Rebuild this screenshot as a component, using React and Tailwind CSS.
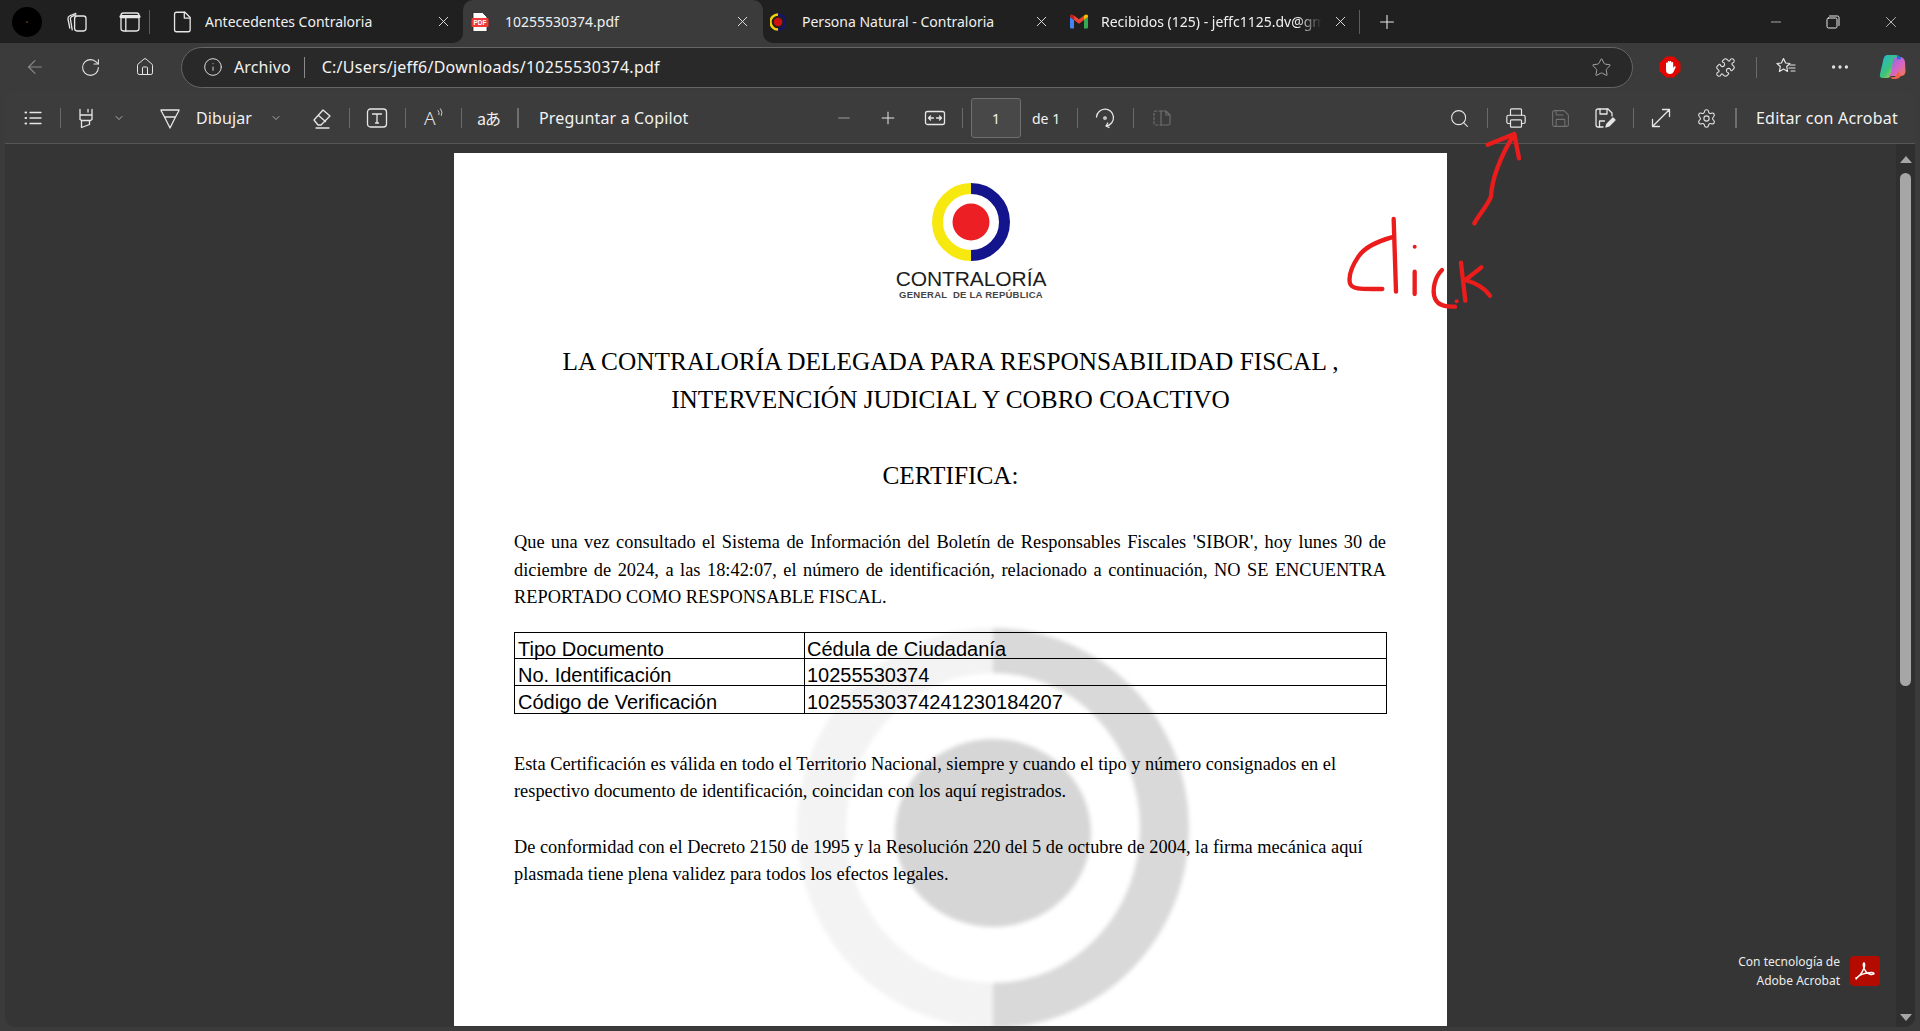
import React from "react";
import { ArrowLeft, RotateCw, Home, Info, Star, Puzzle, MoreHorizontal, Search, Printer, Save, Settings, Minus, Plus, X, ChevronDown } from "lucide-react";

const S = ({ children, className = "", size = 20, stroke = 1.3, vb = "0 0 20 20" }) => (
  <svg width={size} height={size} viewBox={vb} fill="none" stroke="currentColor" strokeWidth={stroke} strokeLinecap="round" strokeLinejoin="round" className={"shrink-0 " + className}>{children}</svg>
);

const Slot = ({ className = "", children }) => (
  <div className={"flex shrink-0 items-center justify-center " + className}>{children}</div>
);
const Sep = ({ className = "" }) => <div className={"w-px h-[20px] shrink-0 bg-[#6a6a6a] " + className} />;

const Tab = ({ outer = "", inner = "", icon, label, labelClass = "", closeClass = "" }) => (
  <div className={"h-full shrink-0 " + outer}>
    <div className={"flex h-full items-center " + inner}>
      {icon}
      <div className={"flex-1 overflow-hidden pb-[1px] whitespace-nowrap text-[14px] tracking-[0px] text-[#f0f0f0] " + labelClass}>{label}</div>
      <X size={17} strokeWidth={1.3} className={"shrink-0 text-[#e8e8e8] " + closeClass} />
    </div>
  </div>
);

const PdfFav = () => (
  <svg width="18" height="20" viewBox="0 0 18 20" className="shrink-0">
    <path d="M2 0.5h9.5l4.5 4.5v14.500h-14z" fill="#fff" stroke="#222" strokeWidth="0.8" />
    <rect x="0.5" y="6" width="17" height="9" rx="1" fill="#f03a3a" />
    <text x="9" y="13" textAnchor="middle" fontSize="6.5" fontWeight="700" fill="#fff" fontFamily="Liberation Sans, sans-serif">PDF</text>
  </svg>
);
const ContraFav = () => (
  <svg width="16" height="20" viewBox="0 0 16 20" className="shrink-0">
    <path d="M8 2.500a7.500 7.500 0 0 0 0 15" fill="none" stroke="#f5d20a" strokeWidth="2.4" />
    <path d="M8 2.500a7.500 7.500 0 0 1 0 15" fill="none" stroke="#15156e" strokeWidth="2.4" />
    <circle cx="8" cy="10" r="4.2" fill="#cf1010" />
  </svg>
);
const Gmail = () => (
  <svg width="18" height="15" viewBox="0 0 18 15" className="shrink-0">
    <path d="M0 3v10.500q0 1 1 1h3V6z" fill="#4285f4" />
    <path d="M18 3v10.500q0 1-1 1h-3V6z" fill="#34a853" />
    <path d="M14 1.500V6l4-3V2q0-2-2-1.500z" fill="#fbbc04" />
    <path d="M4 6V1.500L9 5.300l5-3.800V6L9 9.800z" fill="#ea4335" />
    <path d="M0 3V2Q0 0 2 .5L4 1.500V6z" fill="#c5221f" />
  </svg>
);

const Copilot = () => (
  <svg width="28" height="28" viewBox="0 0 28 28">
    <defs>
      <linearGradient id="cpa" x1="0" y1="0" x2="1" y2="1"><stop offset="0" stopColor="#20b4e6" /><stop offset="0.55" stopColor="#3dc37a" /><stop offset="1" stopColor="#f5c93c" /></linearGradient>
      <linearGradient id="cpb" x1="0" y1="0" x2="1" y2="1"><stop offset="0" stopColor="#7a6bf0" /><stop offset="0.55" stopColor="#d465c8" /><stop offset="1" stopColor="#f47a4a" /></linearGradient>
    </defs>
    <path d="M9 2h9q2 0 1 3l-6 17q-1 3-4 3H5q-4 0-3-4l3-13q1-6 4-6z" fill="url(#cpa)" />
    <path d="M15 7q1-3 4-3h3q4 0 5 5l.5 9q0 5-5 5h-9q-3 0-3-1 2 0 3-3z" fill="url(#cpb)" />
    <path d="M19 2q3 0 4 4l-4 .5z" fill="#1d6fd8" />
    <path d="M12 24q4 1 6-1l2-5 3 5q-2 3-6 3h-3z" fill="#f0624e" />
  </svg>
);

const TabBar = () => (
  <div className="flex h-[43px] shrink-0 items-center bg-[#202020]">
    <div className="flex h-full w-[165px] shrink-0 items-center text-[#e6e6e6]">
      <div className="ml-[12px] flex h-[30px] w-[30px] shrink-0 items-center justify-center rounded-full bg-black">
        <div className="h-[2px] w-[2px] rounded-full bg-[#5a3a10]" />
      </div>
      <Slot className="ml-[20px] w-[30px]">
        <S size={24} stroke={1.1}><rect x="8" y="5" width="9.500" height="12.500" rx="2" /><path d="M6 16.500 4.500 7.500Q4.300 6 5.500 5.500L9 4" /><path d="M4 15 2.500 7.500Q2.300 5.500 4 4.800L9 2.800" /></S>
      </Slot>
      <Slot className="ml-[23px] w-[30px]">
        <S size={24} stroke={1.1}><rect x="2.500" y="2.500" width="15" height="15" rx="2" /><path d="M2.500 5.500h15" strokeWidth="2.600" /><path d="M6.500 6v11.500" /></S>
      </Slot>
      <div className="ml-[4px] h-[24px] w-px bg-[#5c5c5c]" />
    </div>
    <Tab outer="w-[298px] bg-[#3b3b3b]" inner="rounded-br-[10px] bg-[#202020] pr-[9px] pl-[10px]" label="Antecedentes Contraloria"
      icon={<Slot className="mr-[14px] w-[16px] text-[#e6e6e6]"><S size={26} stroke={1}><path d="M5 2.500h6.500l4 4V16q0 1.500-1.500 1.500H5Q3.500 17.500 3.500 16V4Q3.500 2.500 5 2.500z" /><path d="M11 2.500V7h4.500" /></S></Slot>}
      closeClass="mx-[2px]" />
    <Tab outer="w-[300px]" inner="rounded-t-[10px] bg-[#3b3b3b] pr-[10px] pl-[8px]" label="10255530374.pdf"
      icon={<div className="mr-[16px]"><PdfFav /></div>} closeClass="mx-[2px]" />
    <Tab outer="w-[297px] bg-[#3b3b3b]" inner="rounded-bl-[10px] bg-[#202020] pr-[8px] pl-[7px]" label="Persona Natural - Contraloria"
      icon={<div className="mr-[16px]"><ContraFav /></div>} closeClass="mx-[2px]" />
    <Tab outer="w-[299px]" inner="pr-[8px] pl-[10px]" label="Recibidos (125) - jeffc1125.dv@gmail.com"
      labelClass="[mask-image:linear-gradient(to_right,black_88%,transparent_99%)]"
      icon={<div className="mr-[13px]"><Gmail /></div>} closeClass="mx-[2px] ml-[8px]" />
    <div className="h-[24px] w-px shrink-0 bg-[#5c5c5c]" />
    <Plus size={22} strokeWidth={1.2} className="ml-[16px] shrink-0 text-[#e8e8e8]" />
    <div className="ml-auto flex items-center pr-[20px] text-[#e8e8e8]">
      <Minus size={16} strokeWidth={1} className="mr-[42px]" />
      <S size={14} stroke={1} vb="0 0 14 14" className="mr-[42px]"><rect x="1" y="3" width="10" height="10" rx="1.500" /><path d="M3.500 1h8q1.500 0 1.500 1.500v8" /></S>
      <X size={18} strokeWidth={1} />
    </div>
  </div>
);

const AddressBar = () => (
  <div className="flex h-[49px] shrink-0 items-center bg-[#3b3b3b] pb-[1px] text-[#e6e6e6]">
    <Slot className="ml-[24px] w-[22px] text-[#8a8a8a]"><ArrowLeft size={22} strokeWidth={1.2} /></Slot>
    <Slot className="ml-[33px] w-[22px]"><RotateCw size={21} strokeWidth={1.2} /></Slot>
    <Slot className="ml-[33px] w-[22px]"><Home size={20} strokeWidth={1.2} /></Slot>
    <div className="ml-[25px] flex h-[41px] w-[1452px] shrink-0 items-center rounded-full border border-[#666] bg-[#292929] pr-[20px] pl-[21px]">
      <Info size={20} strokeWidth={1.1} className="shrink-0 text-[#e8e8e8]" />
      <span className="ml-[11px] text-[16px] tracking-[0.1px] text-[#f0f0f0]">Archivo</span>
      <div className="ml-[13px] h-[21px] w-px bg-[#8a8a8a]" />
      <span className="ml-[17px] text-[16px] tracking-[0.25px] text-[#f4f4f4]">C:/Users/jeff6/Downloads/10255530374.pdf</span>
      <Star size={21} strokeWidth={1.1} className="ml-auto text-[#a8a8a8]" />
    </div>
    <Slot className="ml-[26px] w-[22px]">
      <svg width="22" height="22" viewBox="0 0 22 22">
        <polygon points="7,0.5 15,0.5 21.5,7 21.5,15 15,21.5 7,21.5 0.5,15 0.5,7" fill="#e10600" />
        <path d="M7 12V7.500a.9.9 0 0 1 1.800 0V6a.9.9 0 0 1 1.800 0v0a.9.9 0 0 1 1.800 0v1a.9.9 0 0 1 1.800 0v5l1-1.500q1.200-.8 1.600.4L14.500 16q-1 2-3.500 2-4 0-4-4z" fill="#fff" />
      </svg>
    </Slot>
    <Slot className="ml-[33px] w-[22px]"><Puzzle size={21} strokeWidth={1.2} /></Slot>
    <Sep className="ml-[20px] h-[21px]" />
    <Slot className="ml-[18px] w-[22px]">
      <S size={22} stroke={1.2} vb="0 0 22 22"><path d="M8.500 2.500 10.600 7l4.400.5-3.300 3 .9 5-4.100-2.400-4.100 2.400.9-5-3.300-3L6.400 7z" /><path d="M14 12h6M16 15h4M15 9h5" /></S>
    </Slot>
    <Slot className="ml-[32px] w-[22px]"><MoreHorizontal size={22} strokeWidth={1.6} /></Slot>
    <Slot className="ml-[26px] w-[30px]"><Copilot /></Slot>
  </div>
);

const Label = ({ children, className = "" }) => <span className={"whitespace-nowrap text-[#f2f2f2] " + className}>{children}</span>;

const PdfToolbar = () => (
  <div className="flex h-[52px] shrink-0 items-center rounded-t-[8px] border-b border-[#565656] bg-[#3c3c3c] pt-[1px] text-[#e6e6e6]">
    <Slot className="ml-[17px] w-[22px]"><S size={22} vb="0 0 22 22" stroke={1.3}><path d="M8 5.500h11M8 11h11M8 16.500h11" /><path d="M3.500 5.500h.6M3.500 11h.6M3.500 16.500h.6" strokeWidth="2" /></S></Slot>
    <Sep className="ml-[16px]" />
    <Slot className="ml-[14px] w-[22px]"><S size={22} vb="0 0 22 22"><path d="M5 2.500V8h12V2.500M13 2.500V5M5 8v4.500l1.500 1h9l1.500-1V8M6.500 13.500v7l8-3v-4" /></S></Slot>
    <Slot className="ml-[16px] w-[12px]"><ChevronDown size={12} strokeWidth={1.3} /></Slot>
    <Slot className="ml-[33px] w-[24px]"><S size={24} vb="0 0 24 24"><path d="M3 4h18M3 4.500 6.500 11h11L21 4.500M6.500 11l5.500 11 5.500-11" /></S></Slot>
    <Label className="ml-[14px] w-[56px] text-[16px] tracking-[0.1px]">Dibujar</Label>
    <Slot className="ml-[18px] w-[12px]"><ChevronDown size={12} strokeWidth={1.3} /></Slot>
    <Slot className="ml-[28px] w-[24px]"><S size={22} vb="0 0 22 22"><path d="m3 13 9-10 7 6-9 9H7z" /><path d="m7.500 8.500 7 6M5 21h13" /></S></Slot>
    <Sep className="ml-[15px]" />
    <Slot className="ml-[16px] w-[22px]"><S size={22} vb="0 0 22 22"><rect x="1.500" y="2" width="19" height="18" rx="3" /><path d="M6.500 7h9M11 7v9M9.500 16h3" /></S></Slot>
    <Sep className="ml-[17px]" />
    <div className="ml-[18px] flex w-[20px] shrink-0 items-start">
      <span className="text-[19px] leading-[20px] font-light">A</span>
      <S size={10} vb="0 0 9 12" stroke={1}><path d="M1 3q2 2 1 5M4 1q3 4 1 8" /></S>
    </div>
    <Sep className="ml-[17px]" />
    <Label className="ml-[15px] w-[22px] text-[16px] leading-none tracking-[-1px] [font-family:'Noto_Sans_CJK_JP','Noto_Sans',sans-serif]">aあ</Label>
    <div className="ml-[18px] h-[20px] w-[2px] shrink-0 bg-[#6e6e6e]" />
    <Label className="ml-[20px] w-[150px] text-[16px] tracking-[0.15px]">Preguntar a Copilot</Label>
    <Slot className="ml-[145px] w-[20px] text-[#a8a8a8]"><Minus size={18} strokeWidth={1.2} /></Slot>
    <Slot className="ml-[24px] w-[20px]"><Plus size={20} strokeWidth={1.2} /></Slot>
    <Slot className="ml-[26px] w-[22px]"><S size={22} vb="0 0 22 22"><rect x="1.500" y="4.500" width="19" height="13" rx="2" /><path d="M4.500 11h5M6.500 9l-2 2 2 2M17.500 11h-5M15.500 9l2 2-2 2" /></S></Slot>
    <Sep className="ml-[16px]" />
    <div className="ml-[8px] flex h-[40px] w-[50px] shrink-0 items-center justify-center rounded-[3px] border border-[#6f6f6f] bg-[#484848] text-[14px] text-[#f2f2f2]">1</div>
    <Label className="ml-[11px] w-[30px] text-[14px]">de 1</Label>
    <Sep className="ml-[15px]" />
    <Slot className="ml-[16px] w-[22px]"><S size={22} vb="0 0 22 22"><path d="M2.500 10a8.500 8.500 0 1 1 10 9" /><path d="m15 20.500-3-1.500 1.800-3" /><circle cx="11" cy="11" r="1.200" /></S></Slot>
    <Sep className="ml-[17px]" />
    <Slot className="ml-[18px] w-[20px] text-[#6d6d6d]"><S size={20} stroke={1.2}><path d="M9 3H3.500q-1.500 0-1.500 1.500v11Q2 17 3.500 17H9" strokeDasharray="2.200 2" /><path d="M9 3h5l4 4v8.500q0 1.500-1.500 1.500H9zM14 3v4h4" /></S></Slot>
    <Slot className="ml-[276px] w-[22px]"><Search size={21} strokeWidth={1.2} /></Slot>
    <Sep className="ml-[17px]" />
    <Slot className="ml-[17px] w-[22px]"><Printer size={22} strokeWidth={1.3} /></Slot>
    <Slot className="ml-[22px] w-[22px] text-[#727272]"><Save size={21} strokeWidth={1.2} /></Slot>
    <Slot className="ml-[23px] w-[22px]">
      <S size={22} vb="0 0 22 22"><path d="M9 20H4q-2 0-2-2V4q0-2 2-2h10l4 4v3" /><path d="M6 2v5h7V2M5.500 20v-6h5" /><path d="m12 20 1-3 6-6 2 2-6 6z" fill="currentColor" /></S>
    </Slot>
    <Sep className="ml-[17px]" />
    <Slot className="ml-[16px] w-[22px]"><S size={22} vb="0 0 22 22"><path d="M3 19 19 3M12.500 2.500h7v7M2.500 12.500v7h7" /></S></Slot>
    <Slot className="ml-[23px] w-[22px]"><Settings size={21} strokeWidth={1.2} /></Slot>
    <div className="ml-[18px] h-[20px] w-[2px] shrink-0 bg-[#6e6e6e]" />
    <Label className="ml-[19px] text-[16px] tracking-[0.2px]">Editar con Acrobat</Label>
  </div>
);

const Line = ({ children, j }) => (
  <div className={"h-[27.5px] whitespace-nowrap leading-[27.5px] " + (j ? "[text-align-last:justify]" : "")}>{children}</div>
);

const Row = ({ a, b, last }) => (
  <div className={"flex h-[26.8px] leading-[26px] " + (last ? "" : "border-b border-black")}>
    <div className="h-full w-[290px] shrink-0 border-r border-black pt-[3px] pl-[3px]">{a}</div>
    <div className="h-full pt-[3px] pl-[2px]">{b}</div>
  </div>
);

const Page = () => (
  <div className="relative ml-[449px] h-[873px] w-[993px] shrink-0 overflow-hidden bg-white text-black [font-family:'Liberation_Serif',serif]">
    <svg width="418" height="418" viewBox="0 0 418 418" className="absolute top-[470px] left-[330px] blur-[2px]">
      <path d="M209 5A196 200 0 0 0 209 405V360A147 155 0 0 1 209 50z" fill="#f3f3f3" />
      <path d="M209 5A196 200 0 0 1 209 405V360A147 155 0 0 0 209 50z" fill="#d9d9d9" />
      <ellipse cx="209" cy="210" rx="98" ry="94" fill="#d6d6d6" />
    </svg>
    <div className="relative flex flex-col">
      <div className="mt-[30px] ml-[478px] h-[78px] w-[78px]">
        <svg width="78" height="78" viewBox="0 0 78 78" className="blur-[0.4px]">
          <path d="M39 5.500a33.500 33.500 0 0 0 0 67" fill="none" stroke="#f7e80f" strokeWidth="11" />
          <path d="M39 5.500a33.500 33.500 0 0 1 0 67" fill="none" stroke="#14148c" strokeWidth="11" />
          <circle cx="39" cy="39" r="18.500" fill="#ec2024" />
        </svg>
      </div>
      <div className="ml-[417px] w-[200px] text-center [font-family:'Liberation_Sans',sans-serif]">
        <div className="mt-[8px] text-[21px] leading-[20px] tracking-[-0.1px] text-[#1c1c1c]">CONTRALORÍA</div>
        <div className="text-[9.5px] leading-[11px] font-bold tracking-[0.25px] whitespace-pre text-[#444]">GENERAL  DE LA REPÚBLICA</div>
      </div>
      <div className="mt-[42px] text-center text-[25.3px] leading-[38px]">
        <div>LA CONTRALORÍA DELEGADA PARA RESPONSABILIDAD FISCAL ,</div>
        <div>INTERVENCIÓN JUDICIAL Y COBRO COACTIVO</div>
      </div>
      <div className="mt-[38px] text-center text-[25.3px] leading-[38px]">CERTIFICA:</div>
      <div className="mt-[35px] ml-[60px] w-[872px] text-[18.35px]">
        <Line j>Que una vez consultado el Sistema de Información del Boletín de Responsables Fiscales 'SIBOR', hoy lunes 30 de</Line>
        <Line j>diciembre de 2024, a las 18:42:07, el número de identificación, relacionado a continuación, NO SE ENCUENTRA</Line>
        <Line>REPORTADO COMO RESPONSABLE FISCAL.</Line>
      </div>
      <div className="mt-[20px] ml-[60px] w-[873px] border border-black text-[20px] [font-family:'Liberation_Sans',sans-serif]">
        <Row a="Tipo Documento" b="Cédula de Ciudadanía" />
        <Row a="No. Identificación" b="10255530374" />
        <Row a="Código de Verificación" b="10255530374241230184207" last />
      </div>
      <div className="mt-[37px] ml-[60px] text-[18.35px]">
        <Line>Esta Certificación es válida en todo el Territorio Nacional, siempre y cuando el tipo y número consignados en el</Line>
        <Line>respectivo documento de identificación, coincidan con los aquí registrados.</Line>
      </div>
      <div className="mt-[28px] ml-[60px] text-[18.35px]">
        <Line>De conformidad con el Decreto 2150 de 1995 y la Resolución 220 del 5 de octubre de 2004, la firma mecánica aquí</Line>
        <Line>plasmada tiene plena validez para todos los efectos legales.</Line>
      </div>
    </div>
  </div>
);

const Annotation = () => (
  <svg width="220" height="200" viewBox="0 0 660 600" fill="none" stroke="#ea1c1c" strokeWidth="13" strokeLinecap="round" strokeLinejoin="round" className="pointer-events-none absolute top-[120px] left-[1320px]">
    <path d="M215 352C170 365 135 380 115 410 95 440 85 470 90 490 95 510 130 507 187 507" />
    <path d="M221 297 228 515" />
    <path d="M284 455V522" />
    <path d="M366 450C345 470 335 510 345 535 355 560 385 560 405 560" />
    <path d="M423 428 436 542M484 442 436 480C470 490 495 505 510 527" />
    <path d="M463 310C480 280 500 260 513 230 515 180 540 110 583 42M503 74 583 42 597 115" />
    <circle cx="284" cy="380" r="6" fill="#ea1c1c" stroke="none" />
    <circle cx="410" cy="544" r="6" fill="#ea1c1c" stroke="none" />
  </svg>
);

const Viewer = () => (
  <div className="relative flex h-[883px] shrink-0 overflow-hidden rounded-b-[10px] bg-[#353535] pt-[9px]">
    <Page />
    <div className="absolute top-[808px] right-[35px] flex items-center gap-[10px]">
      <div className="text-right text-[12px] leading-[19px] text-[#ececec]">
        <div>Con tecnología de</div>
        <div>Adobe Acrobat</div>
      </div>
      <svg width="30" height="30" viewBox="0 0 30 30">
        <rect width="30" height="30" rx="4" fill="#b30b00" />
        <path d="M6 22c3-1 6-5 8-10 .8-2.300.8-5 0-5s-1 3 .3 6c1.500 3 4 5 6.500 5.400 2 .2 3.500-.4 3-1.200-.5-.8-4-.8-8 0-4 .9-7.500 2.500-9 4.800-.8 1.200-.4 1.500-.8 0z" fill="none" stroke="#fff" strokeWidth="1.500" />
      </svg>
    </div>
    <div className="absolute top-0 right-0 bottom-0 flex w-[19px] flex-col items-center bg-[#2f2f2f] pt-[12px] pb-[6px]">
      <div className="h-0 w-0 border-x-[6.5px] border-b-[7px] border-x-transparent border-b-[#a6a6a6]" />
      <div className="mt-[10px] h-[513px] w-[11px] rounded-full bg-[#a6a6a6]" />
      <div className="mt-auto h-0 w-0 border-x-[6.5px] border-t-[7px] border-x-transparent border-t-[#a6a6a6]" />
    </div>
  </div>
);

export default function App() {
  return (
    <div className="relative flex h-[1031px] w-[1920px] flex-col overflow-hidden bg-[#3b3b3b] [font-family:'Noto_Sans',sans-serif]">
      <TabBar />
      <AddressBar />
      <div className="mx-[5px] flex flex-1 flex-col">
        <PdfToolbar />
        <Viewer />
      </div>
      <Annotation />
    </div>
  );
}
